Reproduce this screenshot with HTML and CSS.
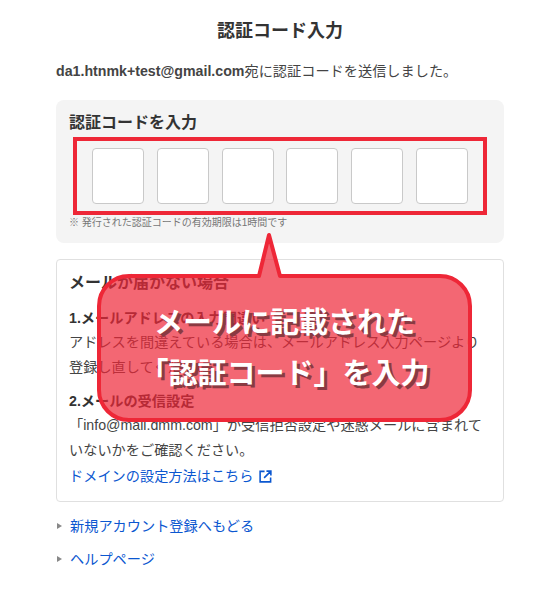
FILE: index.html
```html
<!DOCTYPE html>
<html lang="ja">
<head>
<meta charset="utf-8">
<title>認証コード入力</title>
<link rel="stylesheet" href="styles.css">
</head>
<body>
<main class="page">
  <h1 class="title">認証コード入力</h1>
  <p class="sent"><b>da1.htnmk+test@gmail.com</b>宛に認証コードを送信しました。</p>
  <section class="panel">
    <h2 class="panel-title">認証コードを入力</h2>
    <div class="codes">
      <input class="code" type="text" aria-label="1">
      <input class="code" type="text" aria-label="2">
      <input class="code" type="text" aria-label="3">
      <input class="code" type="text" aria-label="4">
      <input class="code" type="text" aria-label="5">
      <input class="code" type="text" aria-label="6">
    </div>
    <p class="note">※ 発行された認証コードの有効期限は1時間です</p>
  </section>
  <section class="help">
    <h2 class="help-title">メールが届かない場合</h2>
    <h3 class="help-head">1.メールアドレスの入力間違い</h3>
    <p class="help-text">アドレスを間違えている場合は、メールアドレス入力ページより登録し直してください。</p>
    <h3 class="help-head second">2.メールの受信設定</h3>
    <p class="help-text">「info@mail.dmm.com」が受信拒否設定や迷惑メールに含まれていないかをご確認ください。</p>
    <a class="link domain" href="#">ドメインの設定方法はこちら
      <svg class="ext" viewBox="0 0 14 14" width="13" height="13" aria-hidden="true"><path d="M6 1.500H1.200v11.300h11.300V8M8 1.200h4.800V6M12.500 1.500 5.500 8.500" fill="none" stroke="#0b57d0" stroke-width="1.700"/></svg>
    </a>
  </section>
  <ul class="links">
    <li><a class="link" href="#">新規アカウント登録へもどる</a></li>
    <li><a class="link" href="#">ヘルプページ</a></li>
  </ul>
</main>
<div class="highlight"></div>
<div class="callout">
  <svg class="bubble" viewBox="0 0 383 197" width="383" height="197" aria-hidden="true">
    <path d="M32 44H162L172 3L183 44H343A30 30 0 0 1 373 74V158A30 30 0 0 1 343 188H32A30 30 0 0 1 2 158V74A30 30 0 0 1 32 44Z" fill="#ee2737" fill-opacity=".7" stroke="#ee2737" stroke-width="4" stroke-linejoin="round"/>
  </svg>
  <p class="callout-text">メールに記載された<br>「認証コード」を入力</p>
</div>
</body>
</html>
```
FILE: styles.css
```css
* { box-sizing: border-box; }
html, body { margin: 0; padding: 0; background: #fff; }
body {
  width: 557px;
  height: 600px;
  overflow: hidden;
  position: relative;
  font-family: "Liberation Sans", "Noto Sans CJK JP", sans-serif;
  color: #444;
  font-size: 14.200px;
}
.page { width: 448px; margin: 0 0 0 56px; padding-top: 20px; }
.title {
  margin: 0;
  text-align: center;
  font-size: 18px;
  line-height: 22px;
  font-weight: 700;
  color: #333;
}
.sent { margin: 18px 0 0; font-size: 14.200px; line-height: 22px; }
.sent b { font-weight: 700; }
.panel {
  margin-top: 18px;
  height: 143px;
  padding: 12px 13px 0;
  background: #f4f4f4;
  border-radius: 8px;
}
.panel-title { margin: 0; font-size: 16px; line-height: 21px; font-weight: 700; color: #333; }
.codes { display: flex; justify-content: space-between; margin: 15px 23px 0; }
.code {
  display: block;
  width: 52px;
  height: 56px;
  padding: 0;
  background: #fff;
  border: 1px solid #c9c9c9;
  border-radius: 4px;
}
.note { margin: 12px 0 0; font-size: 10px; line-height: 14px; color: #777; }
.help {
  margin-top: 16px;
  height: 243px;
  padding: 12px 12px 0;
  border: 1px solid #e0e0e0;
  border-radius: 4px;
}
.help-title { margin: 0; font-size: 16px; line-height: 22px; font-weight: 700; color: #333; }
.help-head { margin: 12px 0 0; font-size: 14.200px; line-height: 24px; font-weight: 700; color: #333; }
.help-head.second { margin-top: 10px; }
.help-text { margin: 0; font-size: 14.200px; line-height: 24.500px; }
.link { color: #0b57d0; text-decoration: none; font-size: 14.200px; }
.domain { display: block; margin-top: 2px; line-height: 25px; }
.ext { vertical-align: -2px; margin-left: 2px; }
.links { list-style: none; margin: 12px 0 0; padding: 0 0 0 14px; }
.links li { position: relative; line-height: 25px; margin-bottom: 8px; }
.links li::before {
  content: "";
  position: absolute;
  left: -13px;
  top: 9px;
  border-left: 5px solid #888;
  border-top: 3.500px solid transparent;
  border-bottom: 3.500px solid transparent;
}
.highlight {
  position: absolute;
  left: 73px;
  top: 137px;
  width: 414px;
  height: 78px;
  border: 4px solid #ee2737;
}
.callout {
  position: absolute;
  left: 97px;
  top: 232px;
  width: 383px;
  height: 197px;
}
.bubble { display: block; position: absolute; left: 0; top: 0; }
.callout-text {
  position: relative;
  margin: 0;
  padding-top: 66px;
  width: 375px;
  text-align: center;
  font-size: 29px;
  line-height: 51px;
  font-weight: 700;
  color: #fff;
  text-shadow: 3px 3px 0 #8a3a42;
}
```
